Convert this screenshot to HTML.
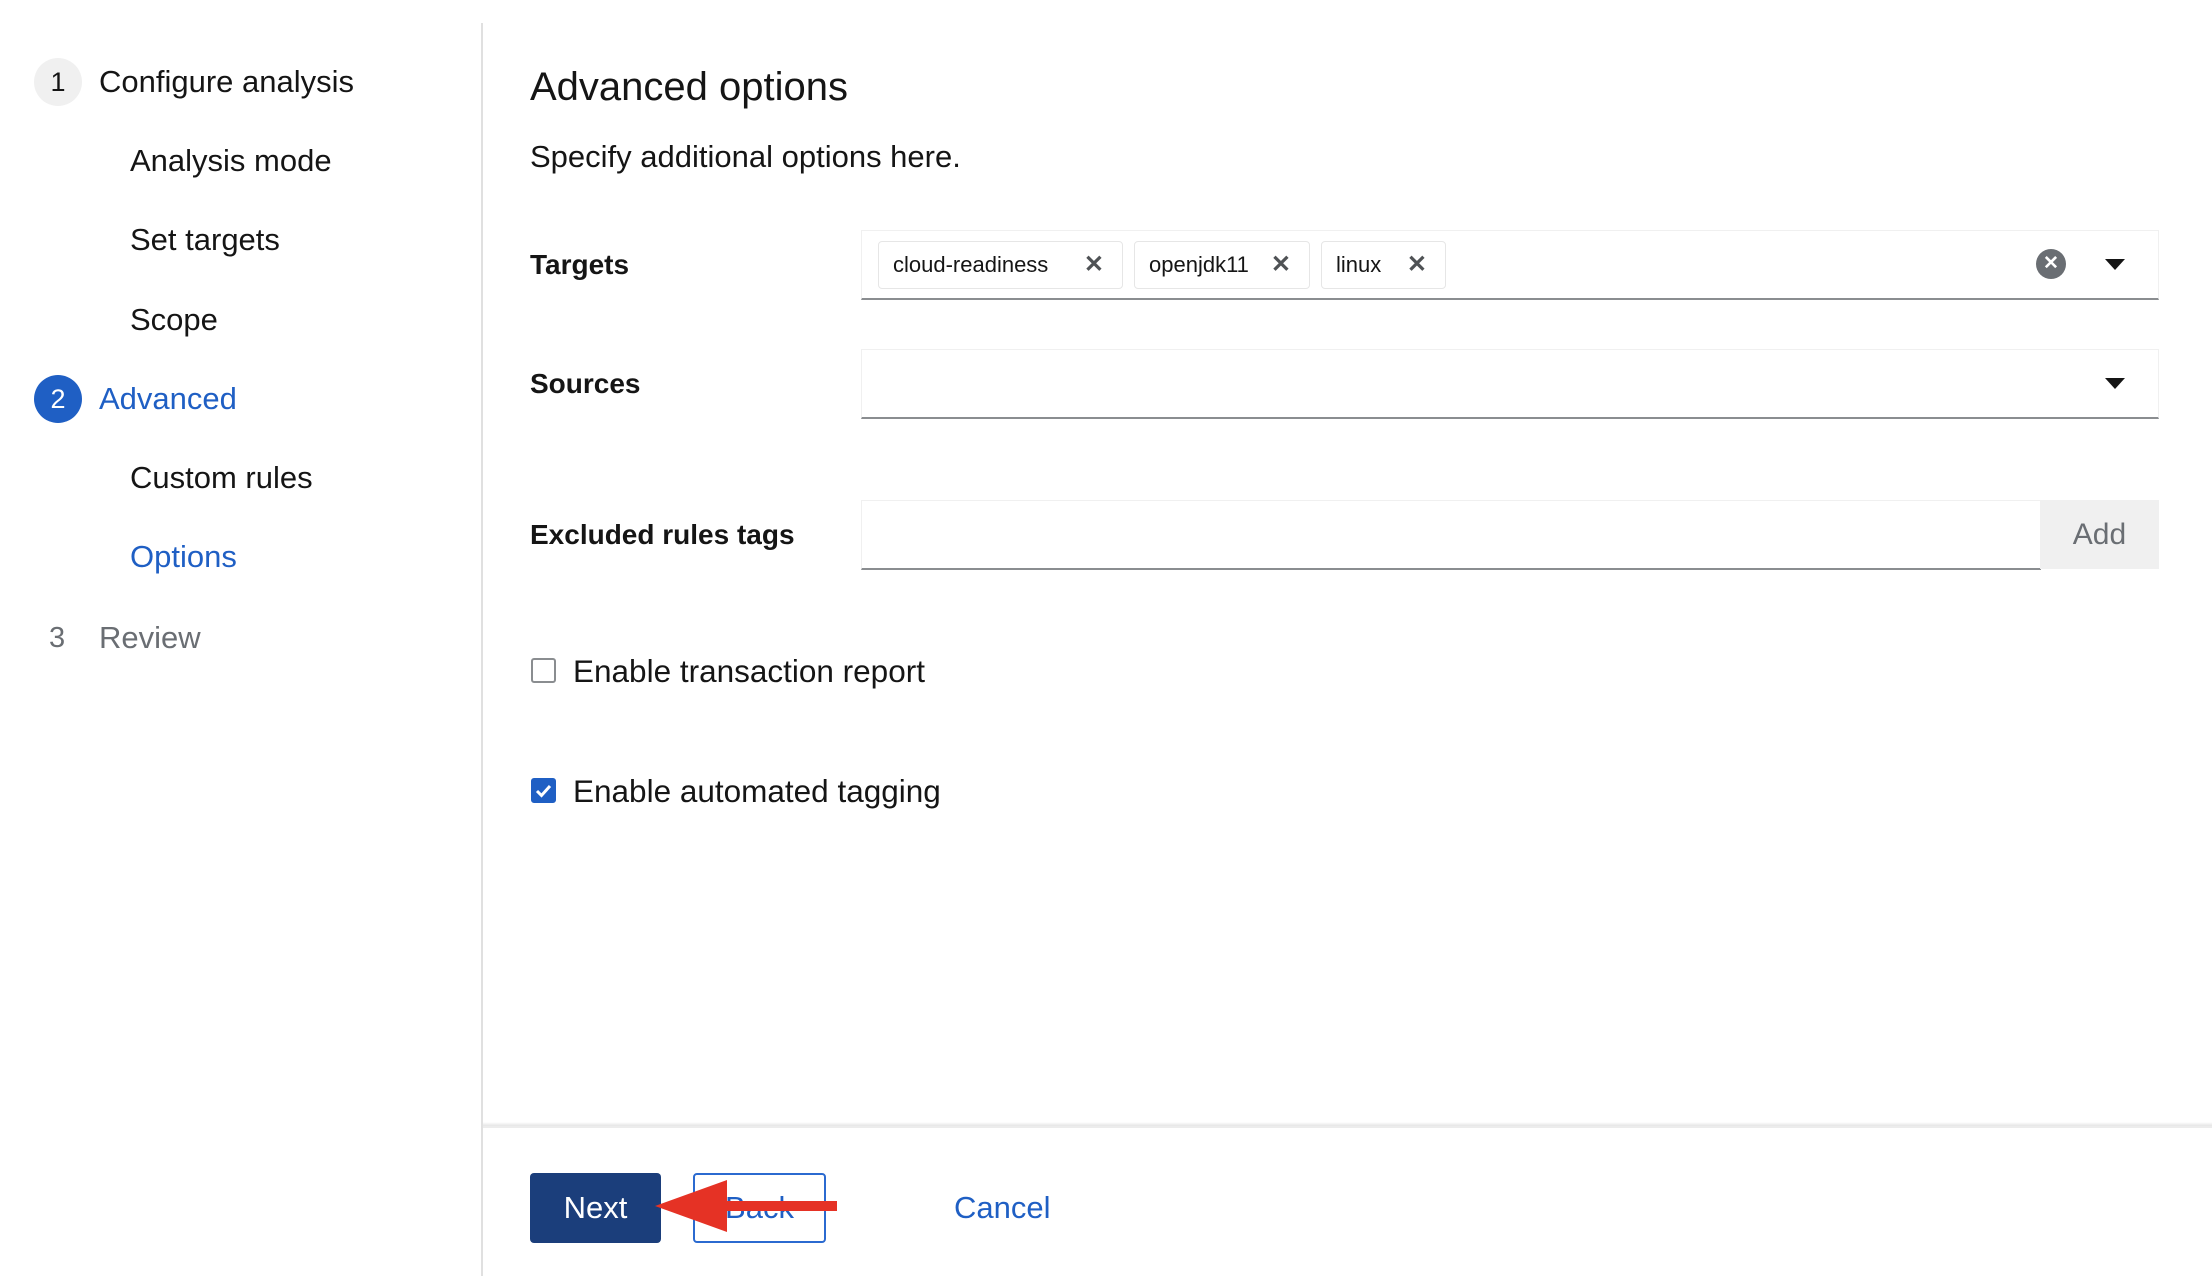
<!DOCTYPE html>
<html><head><meta charset="utf-8"><style>
*{margin:0;padding:0;box-sizing:border-box}
body{width:2212px;height:1276px;background:#fff;font-family:"Liberation Sans",sans-serif;color:#151515;position:relative;overflow:hidden}
.a{position:absolute;white-space:nowrap}
.nav{font-size:31px;line-height:40px}
.circ{position:absolute;width:48px;height:48px;border-radius:50%;text-align:center;line-height:48px;font-size:27px}
.lbl{font-size:28px;font-weight:bold;line-height:36px}
.box{position:absolute;border:1px solid #f0f0f0;border-bottom:2px solid #8a8d90;background:#fff}
.chip{position:absolute;top:10px;height:48px;border:1px solid #e6e6e6;border-radius:4px;font-size:22px;line-height:46px;padding-left:14px;color:#151515}
.chip b{position:absolute;right:18px;top:0;font-size:24px;color:#4f5255}
.caret{position:absolute;width:0;height:0;border-left:10px solid transparent;border-right:10px solid transparent;border-top:11px solid #151515}
.cb{position:absolute;width:25px;height:25px;border:2px solid #8a8d90;border-radius:3px}
</style></head><body>
<div class="a" style="left:481px;top:23px;width:2px;height:1253px;background:#e0e0e0"></div>

<div class="circ" style="left:34px;top:58px;background:#f0f0f0;color:#151515">1</div>
<div class="a nav" style="left:99px;top:62px">Configure analysis</div>
<div class="a nav" style="left:130px;top:141px">Analysis mode</div>
<div class="a nav" style="left:130px;top:220px">Set targets</div>
<div class="a nav" style="left:130px;top:300px">Scope</div>
<div class="circ" style="left:34px;top:375px;background:#1f5fc4;color:#fff">2</div>
<div class="a nav" style="left:99px;top:379px;color:#1f5fc4">Advanced</div>
<div class="a nav" style="left:130px;top:458px">Custom rules</div>
<div class="a nav" style="left:130px;top:537px;color:#1f5fc4">Options</div>
<div class="a nav" style="left:49px;top:618px;color:#6a6e73;font-size:29px">3</div>
<div class="a nav" style="left:99px;top:618px;color:#6a6e73">Review</div>

<div class="a" style="left:530px;top:63px;font-size:40px;line-height:48px">Advanced options</div>
<div class="a" style="left:530px;top:137px;font-size:31px;line-height:40px">Specify additional options here.</div>

<div class="a lbl" style="left:530px;top:247px">Targets</div>
<div class="box" style="left:861px;top:230px;width:1298px;height:70px">
 <div class="chip" style="left:16px;width:245px">cloud-readiness<b>✕</b></div>
 <div class="chip" style="left:272px;width:176px">openjdk11<b>✕</b></div>
 <div class="chip" style="left:459px;width:125px">linux<b>✕</b></div>
 <div style="position:absolute;left:1174px;top:18px;width:30px;height:30px;border-radius:50%;background:#6a6e73;color:#fff;font-size:19px;line-height:30px;text-align:center;font-weight:bold">✕</div>
 <div class="caret" style="left:1243px;top:28px"></div>
</div>

<div class="a lbl" style="left:530px;top:366px">Sources</div>
<div class="box" style="left:861px;top:349px;width:1298px;height:70px">
 <div class="caret" style="left:1243px;top:28px"></div>
</div>

<div class="a lbl" style="left:530px;top:517px">Excluded rules tags</div>
<div class="box" style="left:861px;top:500px;width:1180px;height:70px;border-right:none"></div>
<div class="a" style="left:2040px;top:500px;width:119px;height:69px;background:#f0f0f0;color:#6a6e73;font-size:30px;line-height:69px;text-align:center">Add</div>

<div class="cb" style="left:531px;top:658px"></div>
<div class="a" style="left:573px;top:651px;font-size:31.5px;line-height:40px">Enable transaction report</div>
<div class="cb" style="left:531px;top:778px;background:#1f5fc4;border-color:#1f5fc4">
<svg width="21" height="21" viewBox="0 0 21 21" style="position:absolute;left:0;top:0"><path d="M4 11 L8.5 15.5 L17 6" stroke="#fff" stroke-width="3" fill="none"/></svg></div>
<div class="a" style="left:573px;top:771px;font-size:31.5px;line-height:40px">Enable automated tagging</div>

<div class="a" style="left:483px;top:1122px;width:1729px;height:4px;background:linear-gradient(#fff,#e4e4e4)"></div>
<div class="a" style="left:483px;top:1126px;width:1729px;height:2px;background:#ececec"></div>

<div class="a" style="left:530px;top:1173px;width:131px;height:70px;background:#1b3e7b;border-radius:4px;color:#fff;font-size:31px;line-height:70px;text-align:center">Next</div>
<div class="a" style="left:693px;top:1173px;width:133px;height:70px;border:2px solid #2b6ad0;border-radius:4px;color:#1f5fc4;font-size:31px;line-height:66px;text-align:center">Back</div>
<div class="a" style="left:954px;top:1188px;color:#1f5fc4;font-size:31px;line-height:40px">Cancel</div>
<svg class="a" style="left:0;top:0" width="2212" height="1276"><path d="M655 1206 L727 1180 L727 1201 L837 1201 L837 1211 L727 1211 L727 1232 Z" fill="#e53225"/></svg>
</body></html>
